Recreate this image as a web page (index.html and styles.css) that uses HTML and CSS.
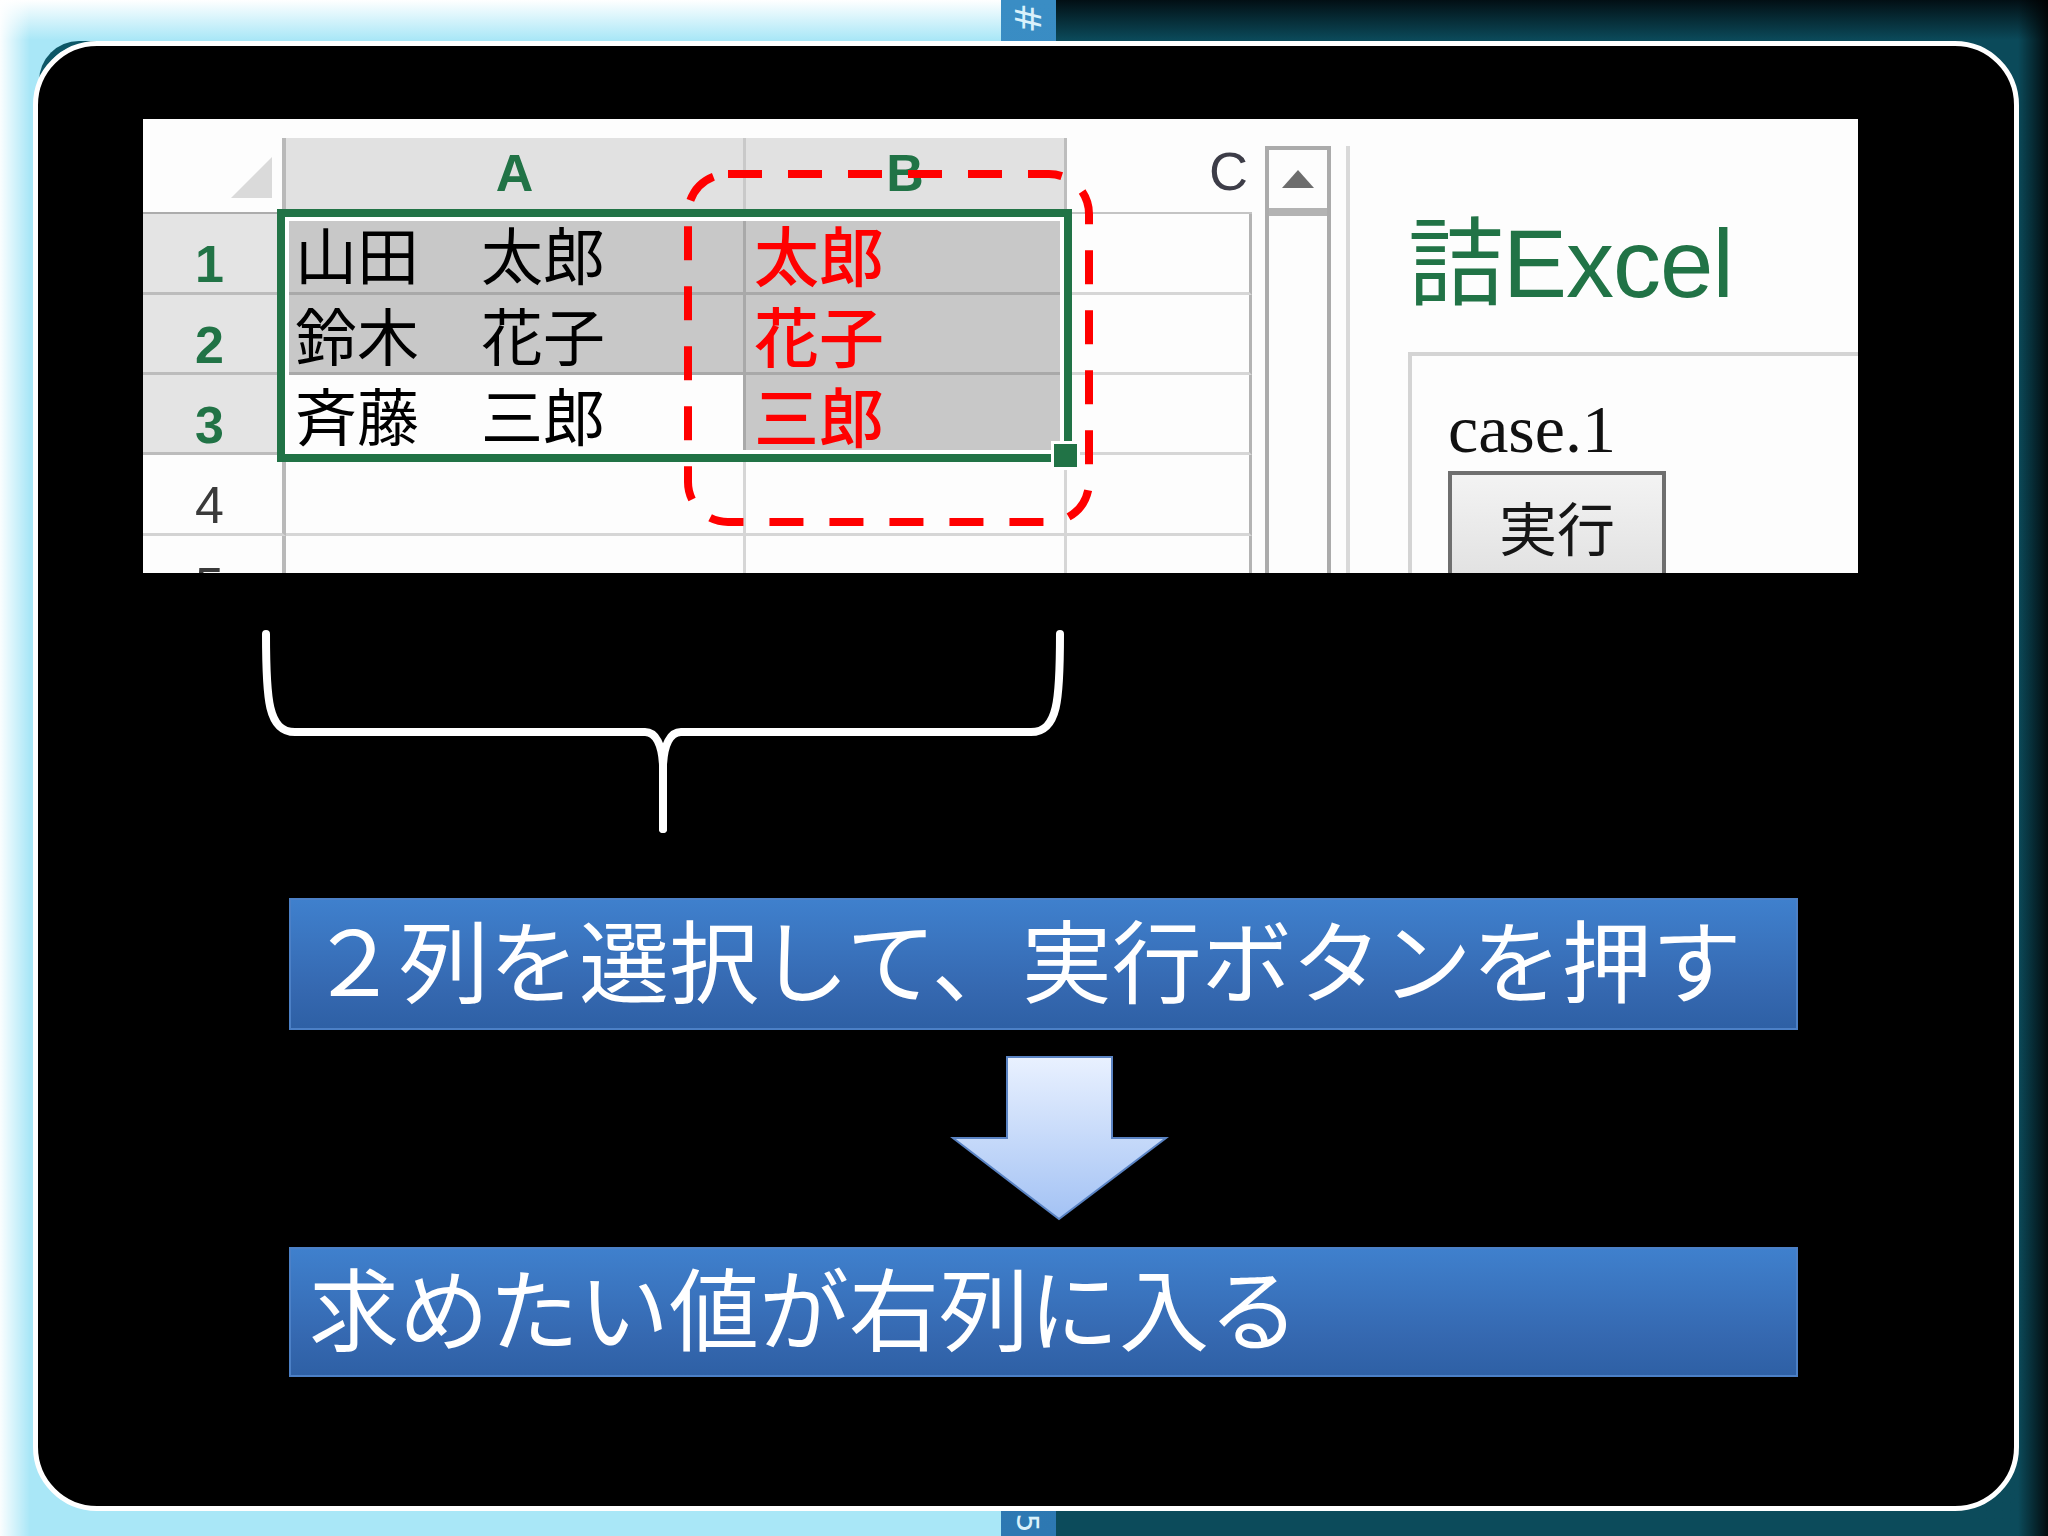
FILE: index.html
```html
<!DOCTYPE html>
<html lang="ja">
<head>
<meta charset="utf-8">
<title>詰Excel case.1</title>
<link rel="stylesheet" href="styles.css">
</head>
<body>
<div class="stage">
  <span class="tab-glyph tab-top">#</span>
  <span class="tab-glyph tab-bottom">5</span>
  <div class="panel">
    <div class="sheet">
      <div class="grid">
        <div class="cell head"><div class="band corner-band"><span class="tri"></span></div></div>
        <div class="cell head"><div class="band col-a">A</div></div>
        <div class="cell head"><div class="band col-b">B</div></div>
        <div class="cell head head-c"><div class="band col-c">C</div></div>

        <div class="cell rowhead on">1</div>
        <div class="cell a sel"><span class="txt">山田　太郎</span></div>
        <div class="cell b sel"><span class="txt red">太郎</span></div>
        <div class="cell c"></div>

        <div class="cell rowhead on">2</div>
        <div class="cell a sel"><span class="txt">鈴木　花子</span></div>
        <div class="cell b sel"><span class="txt red">花子</span></div>
        <div class="cell c"></div>

        <div class="cell rowhead on">3</div>
        <div class="cell a active"><span class="txt">斉藤　三郎</span></div>
        <div class="cell b sel"><span class="txt red">三郎</span></div>
        <div class="cell c"></div>

        <div class="cell rowhead">4</div>
        <div class="cell a"></div>
        <div class="cell b"></div>
        <div class="cell c"></div>

        <div class="cell rowhead last">5</div>
        <div class="cell a last"></div>
        <div class="cell b last"></div>
        <div class="cell c last"></div>

        <div class="selection"></div>
        <div class="handle"></div>
        <svg class="dash" width="1109" height="454" viewBox="0 0 1109 454">
          <rect x="545" y="55" width="401" height="348" rx="40" ry="40" fill="none" stroke="#ff0000" stroke-width="8" stroke-dasharray="34 26"/>
        </svg>
      </div>
      <div class="scrollbar">
        <div class="sb-up">
          <svg width="32" height="18" viewBox="0 0 32 18"><polygon points="16,0 32,18 0,18" fill="#6d6d6d"/></svg>
        </div>
        <div class="sb-track"></div>
      </div>
      <div class="divider"></div>
      <div class="form">
        <div class="title">詰Excel</div>
        <div class="frame">
          <div class="case">case.1</div>
          <div class="btn">実行</div>
        </div>
      </div>
    </div>

    <svg class="brace" width="820" height="210" viewBox="255 628 820 210">
      <path d="M266,634 C266,700 268,732 295,732 L645,732 C656,732 662,745 663,765 L663,829" fill="none" stroke="#fff" stroke-width="8" stroke-linecap="round" stroke-linejoin="round"/>
      <path d="M1060,634 C1060,700 1058,732 1031,732 L681,732 C670,732 664,745 663,765 L663,829" fill="none" stroke="#fff" stroke-width="8" stroke-linecap="round" stroke-linejoin="round"/>
    </svg>

    <div class="note note-1">２列を選択して、実行ボタンを押す</div>

    <svg class="arrow" width="220" height="170" viewBox="950 1054 220 170">
      <defs>
        <linearGradient id="ag" x1="0" y1="0" x2="0" y2="1">
          <stop offset="0" stop-color="#e9f1ff"/>
          <stop offset="1" stop-color="#a3c2f4"/>
        </linearGradient>
      </defs>
      <polygon points="1007,1057 1112,1057 1112,1138 1166,1138 1059,1219 953,1138 1007,1138" fill="url(#ag)" stroke="#5a83c3" stroke-width="2" stroke-linejoin="miter"/>
    </svg>

    <div class="note note-2">求めたい値が右列に入る</div>
  </div>
</div>
</body>
</html>
```
FILE: styles.css
```css
html, body {
  margin: 0;
  padding: 0;
  background: #000;
}

.stage {
  position: relative;
  z-index: 0;
  width: 2048px;
  height: 1536px;
  overflow: hidden;
  box-sizing: border-box;
  padding: 41px 0 0 33px;
  font-family: "Noto Sans CJK JP", sans-serif;
  background:
    linear-gradient(90deg, rgba(255,255,255,0.95) 0, rgba(255,255,255,0) 30px) 0 0 / 60px 100% no-repeat,
    linear-gradient(90deg, rgba(0,0,0,0) 0, rgba(0,0,0,0.85) 30px) 2018px 0 / 30px 100% no-repeat,
    linear-gradient(180deg, #ffffff 0, #a9e7f7 40px, #a9e7f7 100%) 0 0 / 1001px 100% no-repeat,
    linear-gradient(180deg, #3a8dc4 0, #2d78b2 100%) 1001px 0 / 55px 100% no-repeat,
    linear-gradient(180deg, #020f14 0, #0b4a5a 40px, #0c4b5b 100%) 1056px 0 / 992px 100% no-repeat;
}

.tab-glyph {
  position: absolute;
  color: #d9f1fb;
  font-family: "DejaVu Sans", sans-serif;
  line-height: 1;
}
.tab-top {
  left: 1012px;
  top: 0;
  font-size: 36px;
  transform: rotate(90deg);
}
.tab-bottom {
  left: 1017px;
  top: 1508px;
  font-size: 30px;
  transform: rotate(90deg);
}

.panel {
  position: relative;
  width: 1986px;
  height: 1470px;
  box-sizing: border-box;
  border: 5px solid #ffffff;
  border-radius: 64px;
  background: #000;
  padding: 73px 0 0 105px;
}
.panel::before {
  content: "";
  position: absolute;
  z-index: -1;
  left: 1px;
  top: -5px;
  width: 160px;
  height: 160px;
  box-sizing: border-box;
  border-top: 6px solid #0d5767;
  border-left: 6px solid #0d5767;
  border-top-left-radius: 40px;
}

/* ---------- spreadsheet ---------- */
.sheet {
  display: flex;
  align-items: flex-start;
  width: 1715px;
  height: 454px;
  overflow: hidden;
  background: #fdfdfd;
  font-family: "Liberation Sans", "Noto Sans CJK JP", sans-serif;
}

.grid {
  position: relative;
  flex: none;
  display: grid;
  grid-template-columns: 143px 460px 321px 185px;
  grid-template-rows: 95px 81px 80px 80px 81px 37px;
  width: 1109px;
}

.cell {
  box-sizing: border-box;
  display: flex;
  align-items: center;
  min-width: 0;
}

.head {
  padding-top: 19px;
  border-bottom: 2px solid #acacac;
  align-items: stretch;
}
.head-c {
  border-bottom-color: #c4c4c4;
}
.band {
  flex: 1;
  display: flex;
  align-items: center;
  justify-content: center;
  font-size: 52px;
  font-weight: 700;
  color: #217346;
}
.corner-band {
  background: #fdfdfd;
  border-right: 4px solid #b9b9b9;
  justify-content: flex-end;
  align-items: flex-end;
  padding: 0 10px 14px 0;
}
.tri {
  width: 41px;
  height: 41px;
  background: #dadada;
  clip-path: polygon(100% 0, 100% 100%, 0 100%);
}
.col-a {
  background: #e1e1e1;
  border-right: 3px solid #c9c9c9;
  padding-bottom: 4px;
}
.col-b {
  background: #e1e1e1;
  border-right: 3px solid #bdbdbd;
  padding-bottom: 4px;
}
.col-c {
  justify-content: flex-end;
  padding: 0 4px 8px 0;
  font-weight: 400;
  font-size: 54px;
  color: #3d3d48;
}

.rowhead {
  justify-content: center;
  align-items: flex-start;
  background: #fdfdfd;
  border-right: 4px solid #b9b9b9;
  border-bottom: 3px solid #d3d3d3;
  font-size: 52px;
  line-height: 52px;
  font-weight: 400;
  color: #3a3a3a;
  padding: 24px 6px 0 0;
}
.rowhead.on {
  background: #e4e4e4;
  border-bottom-color: #bcbcbc;
  font-weight: 700;
  color: #217346;
}

.a, .b, .c {
  background: #fdfdfd;
  border-bottom: 3px solid #d6d6d6;
  border-right: 3px solid #d6d6d6;
}
.c {
  border-right-color: #b4b4b4;
}
.sel {
  background: #c8c8c8;
  border-bottom-color: #a9a9a9;
  border-right-color: #a9a9a9;
}
.active {
  background: #fdfdfd;
  border-right-color: #a9a9a9;
}
.last {
  border-bottom: none;
}

.txt {
  font-family: "Noto Sans CJK JP", sans-serif;
  font-size: 62px;
  line-height: 62px;
  color: #000;
  white-space: nowrap;
  padding-left: 9px;
}
.txt.red {
  color: #ff0000;
  font-weight: 500;
  font-size: 65px;
  line-height: 62px;
  padding-left: 8px;
}

.selection {
  position: absolute;
  left: 134px;
  top: 90px;
  width: 795px;
  height: 253px;
  box-sizing: border-box;
  border: 8px solid #217346;
  box-shadow: inset 0 0 0 4px #ffffff;
  pointer-events: none;
}
.handle {
  position: absolute;
  left: 911px;
  top: 325px;
  width: 23px;
  height: 23px;
  background: #217346;
  outline: 3px solid #ffffff;
}
.dash {
  position: absolute;
  left: 0;
  top: 0;
  overflow: visible;
}

.scrollbar {
  flex: none;
  margin: 27px 0 0 13px;
  width: 66px;
  height: 440px;
  box-sizing: border-box;
  border: 4px solid #ababab;
  border-bottom: none;
  display: flex;
  flex-direction: column;
}
.sb-up {
  height: 58px;
  flex: none;
  border-bottom: 8px solid #b3b3b3;
  display: flex;
  align-items: center;
  justify-content: center;
  background: #fdfdfd;
}
.sb-track {
  flex: 1;
  background: #fdfdfd;
}

.divider {
  flex: none;
  margin: 27px 0 0 15px;
  width: 4px;
  height: 440px;
  background: #d9d9d9;
}

.form {
  flex: 1;
  display: flex;
  flex-direction: column;
  align-self: stretch;
}
.title {
  margin: 97px 0 0 58px;
  height: 96px;
  font-size: 96px;
  line-height: 96px;
  color: #217346;
  white-space: nowrap;
  letter-spacing: -1px;
}
.frame {
  flex: 1;
  margin: 40px 0 0 58px;
  border-top: 4px solid #d4d4d4;
  border-left: 4px solid #d4d4d4;
  padding: 39px 0 0 36px;
}
.case {
  font-family: "Liberation Serif", serif;
  font-size: 68px;
  line-height: 68px;
  color: #111;
}
.btn {
  margin-top: 8px;
  width: 218px;
  height: 130px;
  box-sizing: border-box;
  border: 4px solid #6f6f6f;
  background: linear-gradient(180deg, #f3f3f3 0, #dedede 100%);
  font-family: "Noto Sans CJK JP", sans-serif;
  font-size: 58px;
  line-height: 58px;
  color: #161616;
  text-align: center;
  padding-top: 22px;
}

/* ---------- annotation ---------- */
.brace {
  display: block;
  margin: 55px 0 0 112px;
}

.note {
  box-sizing: border-box;
  width: 1509px;
  margin-left: 146px;
  border: 2px solid #4c80c6;
  background: linear-gradient(180deg, #3f80cd 0, #3568b0 70%, #2e60a5 100%);
  color: #ffffff;
  font-family: "Noto Sans CJK JP", sans-serif;
  font-size: 90px;
  line-height: 1;
  display: flex;
  align-items: center;
  padding: 0 0 14px 18px;
  white-space: nowrap;
}
.note-1 {
  height: 132px;
  margin-top: 60px;
}
.note-2 {
  height: 130px;
  margin-top: 23px;
}

.arrow {
  display: block;
  margin: 24px 0 0 807px;
}
```
